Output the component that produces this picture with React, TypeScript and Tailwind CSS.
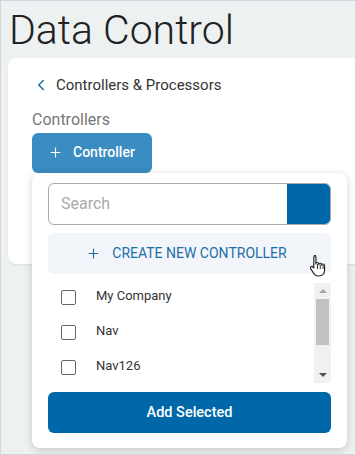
import { Plus, ChevronLeft } from "lucide-react";

const items = ["My Company", "Nav", "Nav126"];

function HandCursor() {
  return (
    <svg width="19" height="23" viewBox="0 0 18 22" className="absolute right-[3px] top-[21px]">
      <path
        d="M5 1.5c.9 0 1.5.6 1.5 1.5v6.5c0-.9.6-1.4 1.4-1.4s1.4.6 1.4 1.4v.6c0-.8.6-1.3 1.4-1.3s1.4.6 1.4 1.4v.6c0-.8.6-1.2 1.3-1.2.8 0 1.4.6 1.4 1.4v4.6c0 3.2-2.2 5.4-5.3 5.4H8.6c-1.7 0-2.8-.7-3.8-2L1.6 14.2c-.5-.7-.4-1.6.3-2 .6-.4 1.4-.3 1.9.3l-.2-.1.9 1V3c0-.9.6-1.5 1.5-1.5z"
        fill="#fff"
        stroke="#222"
        strokeWidth="1.1"
        strokeLinejoin="round"
      />
      <path d="M8 10v4M10.7 10.5v3.5M13.4 11v3" stroke="#222" strokeWidth="0.9" strokeLinecap="round" />
    </svg>
  );
}

export default function App() {
  return (
    <div
      className="h-[455px] w-[356px] overflow-hidden border border-[#d3d6d8] bg-[#eef1f2]"
      style={{ fontFamily: "Roboto, 'Noto Sans', sans-serif" }}
    >
      <h1 className="ml-[8px] mt-[5px] text-[41px] font-light leading-[48px] text-[#222]">Data Control</h1>

      <div className="relative ml-[7px] mt-[4px] h-[206px] w-[360px] rounded-lg bg-white pl-[24px] pt-[16px] shadow-[0_1px_2px_rgba(0,0,0,0.08)]">
        <div className="flex items-center gap-[6px] text-[15px] text-[#333]">
          <ChevronLeft size={18} strokeWidth={2} className="text-[#1a6ca8]" />
          <span>Controllers &amp; Processors</span>
        </div>
        <div className="mt-[13px] text-[16px] leading-[20px] text-[#777]">Controllers</div>
        <button className="mt-[3px] flex h-[40px] w-[120px] items-center gap-[10px] rounded-md bg-[#3b8cc0] pl-[16px] text-[14px] font-medium text-white">
          <Plus size={15} strokeWidth={1.8} />
          <span>Controller</span>
        </button>

        <div className="absolute left-[24px] top-[115px] h-[275px] w-[315px] rounded-lg bg-white px-[16px] pt-[10px] shadow-[0_2px_8px_rgba(0,0,0,0.18)]">
          <div className="flex h-[42px] overflow-hidden rounded-md border border-[#aaa]">
            <input
              placeholder="Search"
              className="flex-1 px-[12px] text-[16px] text-[#333] outline-none placeholder:text-[#aaa]"
            />
            <div className="w-[43px] bg-[#0068a8]" />
          </div>

          <div className="relative mt-[8px] flex h-[41px] items-center justify-center gap-[11px] rounded-md bg-[#f2f6fa] pr-[6px] text-[14px] text-[#1d6ea6]">
            <Plus size={15} strokeWidth={1.8} />
            <span>CREATE NEW CONTROLLER</span>
            <HandCursor />
          </div>

          <div className="mt-[9px] flex h-[100px]">
            <div className="flex-1 overflow-hidden">
              <div className="-mt-[3px]">
                {items.map((name) => (
                  <div key={name} className="flex h-[35px] items-center gap-[20px] pl-[13px] text-[13px] text-[#333]">
                    <span className="h-[15px] w-[15px] rounded-[2px] border-[1.5px] border-[#666]" />
                    <span className="-mt-[4px]">{name}</span>
                  </div>
                ))}
              </div>
            </div>
            <div className="flex w-[17px] flex-col items-center bg-[#f1f1f1]">
              <span className="mt-[6px] h-0 w-0 border-x-[4px] border-b-[4px] border-x-transparent border-b-[#a3a3a3]" />
              <span className="mt-[6px] h-[46px] w-[13px] bg-[#c1c1c1]" />
              <span className="mt-auto mb-[6px] h-0 w-0 border-x-[4px] border-t-[4px] border-x-transparent border-t-[#505050]" />
            </div>
          </div>

          <button className="mt-[9px] h-[41px] w-full rounded-md bg-[#0068a8] text-[14.5px] font-medium text-white">
            Add Selected
          </button>
        </div>
      </div>
    </div>
  );
}
